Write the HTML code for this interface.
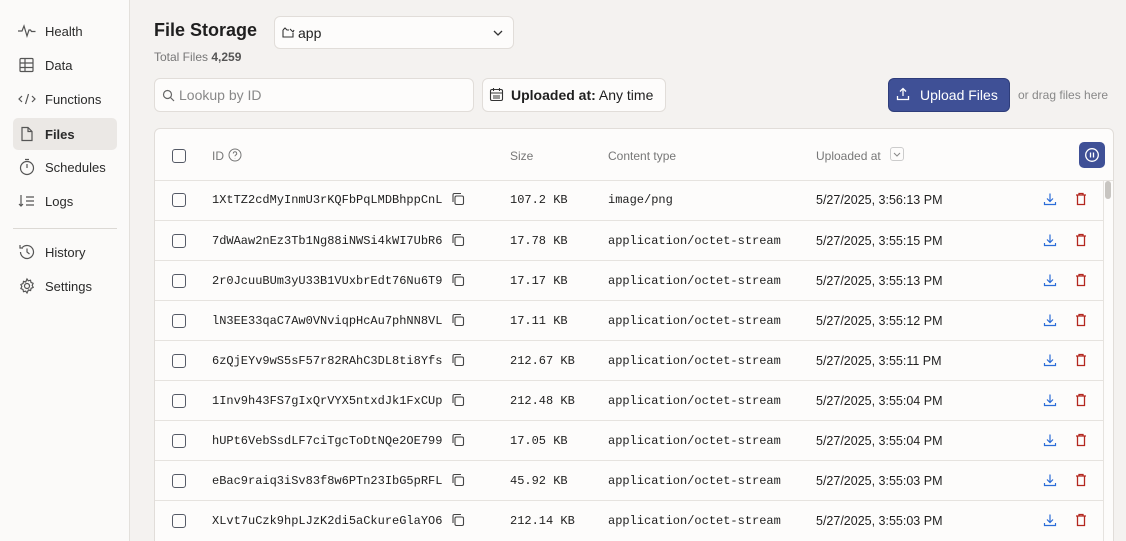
<!DOCTYPE html>
<html><head><meta charset="utf-8"><style>
*{box-sizing:border-box;margin:0;padding:0}
html,body{width:1126px;height:541px;overflow:hidden}
body{background:#f4f2f0;font-family:"Liberation Sans",sans-serif;color:#1f1f1f;position:relative}
.side{position:absolute;left:0;top:0;width:130px;height:541px;background:#fbfaf9;border-right:1px solid #e3e0dc}
.nav{position:absolute;left:13px;width:104px;height:32px;display:flex;align-items:center;font-size:13px;color:#2a2a2a}
.nav svg{margin-left:4px;margin-right:8px}
.nav.act{background:#ebe8e5;border-radius:5px;font-weight:bold}
.hr{position:absolute;left:13px;top:228px;width:104px;border-top:1px solid #dcd9d5}
.t{position:absolute;white-space:nowrap}
.box{position:absolute;background:#fdfcfb;border:1px solid #e1ddd9;border-radius:6px}
.card{position:absolute;left:154px;top:128px;width:960px;height:430px;background:#fdfcfb;border:1px solid #e1ddd9;border-radius:6px;overflow:hidden}
.row{position:absolute;left:0;width:948px;height:40px;border-top:1px solid #e6e3df;font-size:12.5px}
.cb{position:absolute;left:17px;width:14px;height:14px;border:1.3px solid #555a66;border-radius:3px}
.mono{font-family:"Liberation Mono",monospace;font-size:12px}
</style></head><body>
<div class="side">
 <div class="nav" style="top:15px"><svg width="20" height="16" viewBox="0 0 20 16" fill="none" stroke="#555" stroke-width="1.2"><path d="M1 8h4l2-5 3 10 2-6h1.5l1 1.5h4"/></svg>Health</div>
 <div class="nav" style="top:49px"><svg width="20" height="16" viewBox="0 0 20 16" fill="none" stroke="#555" stroke-width="1.2"><rect x="3" y="1.5" width="13" height="13" rx="1"/><path d="M3 6h13M3 10.5h13M8 1.5v13"/></svg>Data</div>
 <div class="nav" style="top:83px"><svg width="20" height="16" viewBox="0 0 20 16" fill="none" stroke="#555" stroke-width="1.2"><path d="M5 5l-3 3 3 3M15 5l3 3-3 3M11.5 3l-3 10"/></svg>Functions</div>
 <div class="nav act" style="top:118px"><svg width="20" height="16" viewBox="0 0 20 16" fill="none" stroke="#555" stroke-width="1.2"><path d="M5 1.5h6l4 4v9H5z M11 1.5v4h4"/></svg>Files</div>
 <div class="nav" style="top:151px"><svg width="20" height="18" viewBox="0 0 20 18" fill="none" stroke="#555" stroke-width="1.2"><circle cx="10" cy="10" r="6.5"/><path d="M8 1.5h4M10 10V6"/></svg>Schedules</div>
 <div class="nav" style="top:185px"><svg width="20" height="16" viewBox="0 0 20 16" fill="none" stroke="#555" stroke-width="1.2"><path d="M4 2v11M2 11l2 2 2-2M9 4h8M9 8h8M9 12h8"/></svg>Logs</div>
 <div class="hr"></div>
 <div class="nav" style="top:236px"><svg width="20" height="18" viewBox="0 0 20 18" fill="none" stroke="#555" stroke-width="1.2"><path d="M3.5 9a6.5 6.5 0 1 0 2-4.7M3 2v3h3M10 5.5V9l2.5 2"/></svg>History</div>
 <div class="nav" style="top:270px"><svg width="20" height="18" viewBox="0 0 20 18" fill="none" stroke="#555" stroke-width="1.2"><circle cx="10" cy="9" r="2.5"/><path d="M10 2l1.3 1.8 2.2-.6.5 2.2 2.1.9-.9 2.1 1 2-2.1.9-.5 2.2-2.2-.5L10 16l-1.3-1.8-2.2.5-.5-2.2-2.1-.9.9-2.1-.9-2 2.1-.9.5-2.2 2.2.6z"/></svg>Settings</div>
</div>

<div class="t" style="left:154px;top:20px;font-size:18px;font-weight:bold">File Storage</div>
<div class="t" style="left:154px;top:50px;font-size:12px;color:#777">Total Files <b style="color:#555">4,259</b></div>
<div class="box" style="left:274px;top:16px;width:240px;height:33px"></div>
<svg class="t" style="left:282px;top:27px" width="13" height="12" viewBox="0 0 13 12" fill="none" stroke="#333" stroke-width="1.1"><path d="M1 3v7h10V6M1 3l2-2 2 2h2M8 2l3 3 1-2"/></svg>
<div class="t" style="left:298px;top:25px;font-size:14px">app</div>
<svg class="t" style="left:493px;top:29px" width="10" height="8" viewBox="0 0 10 8" fill="none" stroke="#333" stroke-width="1.3"><path d="M1 2l4 4 4-4"/></svg>

<div class="box" style="left:154px;top:78px;width:320px;height:34px"></div>
<svg class="t" style="left:162px;top:89px" width="13" height="13" viewBox="0 0 13 13" fill="none" stroke="#666" stroke-width="1.2"><circle cx="5.5" cy="5.5" r="4"/><path d="M8.5 8.5l3.5 3.5"/></svg>
<div class="t" style="left:179px;top:87px;font-size:14px;color:#888">Lookup by ID</div>
<div class="box" style="left:482px;top:78px;width:184px;height:34px"></div>
<svg class="t" style="left:489px;top:87px" width="15" height="15" viewBox="0 0 15 15" fill="none" stroke="#333" stroke-width="1.1"><rect x="1.5" y="2.5" width="12" height="11" rx="1.5"/><path d="M1.5 6h12M4.5 1v3M10.5 1v3M4 9h7M4 11h7"/></svg>
<div class="t" style="left:511px;top:87px;font-size:14px"><b>Uploaded at:</b> Any time</div>

<div class="t" style="left:888px;top:78px;width:122px;height:34px;background:#3f5096;border:1px solid #2e3d7a;border-radius:6px"></div>
<svg class="t" style="left:896px;top:87px" width="14" height="14" viewBox="0 0 14 14" fill="none" stroke="#fff" stroke-width="1.3"><path d="M7 9V1.5M4 4.5l3-3 3 3M1.5 9v3.5h11V9"/></svg>
<div class="t" style="left:920px;top:87px;font-size:14px;color:#fff">Upload Files</div>
<div class="t" style="left:1018px;top:88px;font-size:12px;color:#888">or drag files here</div>

<div class="card">
 <div class="cb" style="top:20px"></div>
 <div class="t" style="left:57px;top:20px;font-size:12px;color:#777">ID</div>
 <svg class="t" style="left:73px;top:19px" width="14" height="14" viewBox="0 0 14 14" fill="none" stroke="#777" stroke-width="1"><circle cx="7" cy="7" r="6"/><path d="M5.3 5.5a1.7 1.7 0 1 1 2.4 1.5c-.5.3-.7.6-.7 1.2M7 10v.3"/></svg>
 <div class="t" style="left:355px;top:20px;font-size:12px;color:#777">Size</div>
 <div class="t" style="left:453px;top:20px;font-size:12px;color:#777">Content type</div>
 <div class="t" style="left:661px;top:20px;font-size:12px;color:#777">Uploaded at</div>
 <div class="t" style="left:735px;top:18px;width:14px;height:14px;border:1px solid #ccc;border-radius:3px"></div>
 <svg class="t" style="left:738px;top:23px" width="8" height="5" viewBox="0 0 8 5" fill="none" stroke="#888"><path d="M1 1l3 3 3-3"/></svg>
 <div class="t" style="left:924px;top:13px;width:26px;height:26px;background:#3f5096;border-radius:5px"></div>
 <svg class="t" style="left:929px;top:18px" width="16" height="16" viewBox="0 0 16 16" fill="none" stroke="#fff" stroke-width="1.3"><circle cx="8" cy="8" r="6.3"/><path d="M6.5 5.5v5M9.5 5.5v5"/></svg>
 <div class="t" style="left:0;top:51px;width:958px;border-top:1px solid #e6e3df"></div>
 <div class="t" style="left:948px;top:51px;height:400px;border-left:1px solid #e6e3df"></div>
 <div class="t" style="left:950px;top:52px;width:6px;height:18px;background:#c8c5c1;border-radius:3px"></div>
 <div id="rows"></div>
</div>
<script>
const d=[["1XtTZ2cdMyInmU3rKQFbPqLMDBhppCnL","107.2 KB","image/png","3:56:13"],
["7dWAaw2nEz3Tb1Ng88iNWSi4kWI7UbR6","17.78 KB","application/octet-stream","3:55:15"],
["2r0JcuuBUm3yU33B1VUxbrEdt76Nu6T9","17.17 KB","application/octet-stream","3:55:13"],
["lN3EE33qaC7Aw0VNviqpHcAu7phNN8VL","17.11 KB","application/octet-stream","3:55:12"],
["6zQjEYv9wS5sF57r82RAhC3DL8ti8Yfs","212.67 KB","application/octet-stream","3:55:11"],
["1Inv9h43FS7gIxQrVYX5ntxdJk1FxCUp","212.48 KB","application/octet-stream","3:55:04"],
["hUPt6VebSsdLF7ciTgcToDtNQe2OE799","17.05 KB","application/octet-stream","3:55:04"],
["eBac9raiq3iSv83f8w6PTn23IbG5pRFL","45.92 KB","application/octet-stream","3:55:03"],
["XLvt7uCzk9hpLJzK2di5aCkureGlaYO6","212.14 KB","application/octet-stream","3:55:03"]];
let h="";d.forEach((r,i)=>{const y=51+i*40;h+=`<div class="row" style="top:${y}px;${i==0?'border-top:none':''}">
<div class="cb" style="top:13px"></div>
<div class="t mono" style="left:57px;top:13px">${r[0]}</div>
<svg class="t" style="left:296px;top:12px" width="14" height="14" viewBox="0 0 14 14" fill="none" stroke="#444" stroke-width="1.1"><rect x="4" y="4" width="8.5" height="8.5" rx="1.5"/><path d="M2 10V3a1.5 1.5 0 0 1 1.5-1.5H10"/></svg>
<div class="t mono" style="left:355px;top:13px">${r[1]}</div>
<div class="t mono" style="left:453px;top:13px">${r[2]}</div>
<div class="t" style="left:661px;top:13px;font-size:12.5px">5/27/2025, ${r[3]} PM</div>
<svg class="t" style="left:888px;top:12px" width="14" height="14" viewBox="0 0 14 14" fill="none" stroke="#2b6cd8" stroke-width="1.2"><path d="M7 1.5v7.5M4 6.5l3 3 3-3M1.5 10v2.5h11V10"/></svg>
<svg class="t" style="left:919px;top:12px" width="14" height="14" viewBox="0 0 14 14" fill="none" stroke="#b3261e" stroke-width="1.3"><path d="M2 3h10M5 3V1.5h4V3M3.5 3v9.5h7V3"/></svg>
</div>`});
document.getElementById("rows").innerHTML=h;
</script>
</body></html>
